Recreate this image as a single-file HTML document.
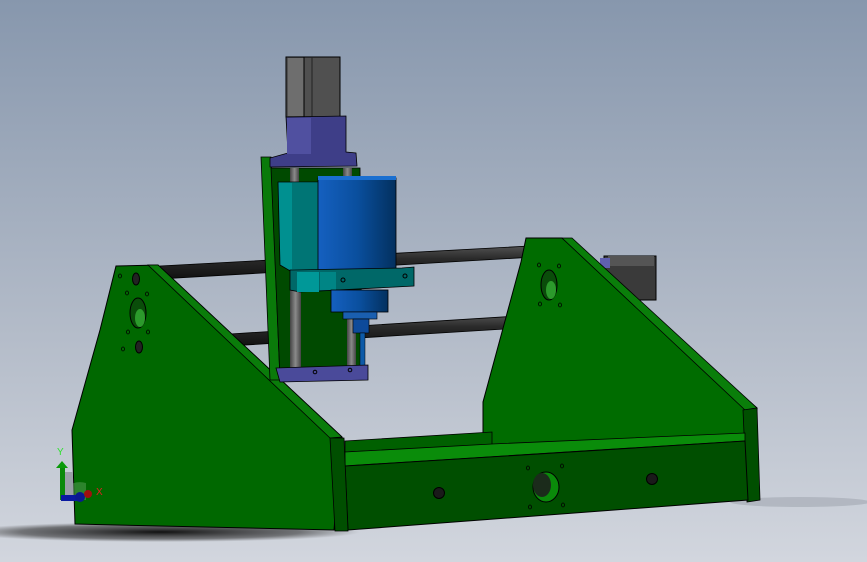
<!DOCTYPE html>
<html><head><meta charset="utf-8"><style>
html,body{margin:0;padding:0;width:867px;height:562px;overflow:hidden}
svg{display:block}
</style></head><body>
<svg width="867" height="562" viewBox="0 0 867 562" xmlns="http://www.w3.org/2000/svg">
<defs>
<linearGradient id="bg" x1="0" y1="0" x2="0" y2="1">
<stop offset="0" stop-color="#8797ad"/><stop offset="0.6" stop-color="#b4bcc9"/><stop offset="1" stop-color="#d2d6de"/>
</linearGradient>
<linearGradient id="rod" x1="0" y1="0" x2="0" y2="1">
<stop offset="0" stop-color="#555"/><stop offset="0.4" stop-color="#2a2a2a"/><stop offset="1" stop-color="#111"/>
</linearGradient>
<linearGradient id="cyl" x1="0" y1="0" x2="1" y2="0">
<stop offset="0" stop-color="#1560c0"/><stop offset="0.5" stop-color="#0a4f9e"/><stop offset="1" stop-color="#03305e"/>
</linearGradient>
<linearGradient id="vrod" x1="0" y1="0" x2="1" y2="0">
<stop offset="0" stop-color="#444"/><stop offset="0.5" stop-color="#8a8a8a"/><stop offset="1" stop-color="#444"/>
</linearGradient>
<radialGradient id="sh" cx="0.5" cy="0.5" r="0.5">
<stop offset="0" stop-color="#111" stop-opacity="1"/><stop offset="0.7" stop-color="#333" stop-opacity="0.6"/><stop offset="1" stop-color="#444" stop-opacity="0"/>
</radialGradient>
</defs>
<rect width="867" height="562" fill="url(#bg)"/>
<ellipse cx="160" cy="532" rx="200" ry="10" fill="url(#sh)"/>
<ellipse cx="800" cy="502" rx="70" ry="5" fill="#9aa0aa" opacity="0.5"/>

<!-- rods -->
<polygon points="160,266 548,245 552,256 160,279" fill="url(#rod)" stroke="#000" stroke-width="0.8"/>
<circle cx="549" cy="250.5" r="5.5" fill="#222"/>
<polygon points="230,334 550,314 553,326 230,346" fill="url(#rod)" stroke="#000" stroke-width="0.8"/>
<circle cx="551" cy="320" r="5.5" fill="#222"/>

<!-- right motor -->
<rect x="604" y="256" width="52" height="44" fill="#3a3a3a" stroke="#000"/>
<rect x="608" y="256" width="46" height="10" fill="#555"/>
<rect x="600" y="258" width="10" height="10" fill="#6060b0"/>

<!-- right plate -->
<polygon points="526,238 562,238 757,408 757,500 483,500 483,402 521,262" fill="#006c00" stroke="#000" stroke-width="1"/>
<polygon points="562,238 572,238 757,408 745,410" fill="#0a7e0a" stroke="#000" stroke-width="0.8"/>
<polygon points="743,410 757,408 760,500 747,502" fill="#004f00" stroke="#000" stroke-width="0.8"/>
<ellipse cx="549" cy="285" rx="8" ry="15" fill="#0a4d0a" stroke="#000"/>
<ellipse cx="551" cy="290" rx="5" ry="9" fill="#2c9a2c"/>
<g fill="none" stroke="#000" stroke-width="0.8"><ellipse cx="539" cy="265" rx="1.5" ry="2"/><ellipse cx="559" cy="266" rx="1.5" ry="2"/><ellipse cx="540" cy="304" rx="1.5" ry="2"/><ellipse cx="560" cy="305" rx="1.5" ry="2"/></g>

<!-- base beam -->
<polygon points="345,441 492,432 492,445 345,452" fill="#006000" stroke="#000" stroke-width="0.8"/>
<polygon points="345,452 492,444 745,433 745,441 345,466" fill="#0a8c0a" stroke="#000" stroke-width="0.8"/>
<polygon points="345,466 745,441 748,500 348,530" fill="#004f00" stroke="#000" stroke-width="1"/>
<circle cx="439" cy="493" r="5.5" fill="#1a1a1a" stroke="#000"/>
<circle cx="652" cy="479" r="5.5" fill="#1a1a1a" stroke="#000"/>
<ellipse cx="546" cy="487" rx="13" ry="15" fill="#0a8a0a" stroke="#000"/>
<ellipse cx="542" cy="485" rx="9" ry="12" fill="#1b2b1b"/>
<g fill="none" stroke="#000" stroke-width="0.8"><ellipse cx="528" cy="468" rx="1.5" ry="2"/><ellipse cx="562" cy="466" rx="1.5" ry="2"/><ellipse cx="530" cy="507" rx="1.5" ry="2"/><ellipse cx="563" cy="505" rx="1.5" ry="2"/></g>

<!-- left plate -->
<polygon points="116,266 158,265 342,437 334,530 75,524 72,430 100,330" fill="#006800" stroke="#000" stroke-width="1"/>
<polygon points="148,265 158,265 342,437 330,438" fill="#0a7c0a" stroke="#000" stroke-width="0.8"/>
<polygon points="330,438 344,438 348,531 335,531" fill="#004f00" stroke="#000" stroke-width="0.8"/>
<ellipse cx="136" cy="279" rx="3.5" ry="6" fill="#222" stroke="#000"/>
<ellipse cx="138" cy="313" rx="8" ry="15" fill="#0a4d0a" stroke="#000"/>
<ellipse cx="140" cy="318" rx="5" ry="9" fill="#2c9a2c"/>
<ellipse cx="139" cy="347" rx="3.5" ry="6" fill="#222" stroke="#000"/>
<g fill="none" stroke="#000" stroke-width="0.8"><ellipse cx="120" cy="276" rx="1.5" ry="2"/><ellipse cx="127" cy="293" rx="1.5" ry="2"/><ellipse cx="147" cy="294" rx="1.5" ry="2"/><ellipse cx="128" cy="332" rx="1.5" ry="2"/><ellipse cx="148" cy="332" rx="1.5" ry="2"/><ellipse cx="123" cy="349" rx="1.5" ry="2"/></g>

<!-- carriage back plate -->
<polygon points="261,157 271,157 280,380 270,380" fill="#0a7a0a" stroke="#000" stroke-width="0.8"/>
<polygon points="271,168 360,168 362,378 280,378" fill="#004a00" stroke="#000" stroke-width="0.8"/>
<rect x="290" y="285" width="11" height="85" fill="url(#vrod)"/>
<rect x="347" y="315" width="9" height="55" fill="url(#vrod)"/>
<rect x="290" y="168" width="9" height="14" fill="url(#vrod)"/>
<rect x="343" y="168" width="9" height="14" fill="url(#vrod)"/>
<!-- motor -->
<rect x="286" y="57" width="54" height="60" fill="#505050" stroke="#000"/>
<rect x="288" y="58" width="16" height="58" fill="#6e6e6e"/>
<line x1="304" y1="57" x2="304" y2="117" stroke="#000"/>
<line x1="312" y1="57" x2="312" y2="117" stroke="#222"/>
<!-- coupler -->
<polygon points="286,117 346,116 346,152 356,153 357,166 270,167 270,158 288,153" fill="#3e3e88" stroke="#000" stroke-width="0.8"/>
<rect x="287" y="118" width="24" height="36" fill="#5050a0"/>
<!-- teal block -->
<polygon points="278,182 320,182 322,270 292,272 280,265" fill="#009090" stroke="#000" stroke-width="0.8"/>
<rect x="292" y="183" width="28" height="86" fill="#007575"/>
<!-- cylinder -->
<rect x="318" y="178" width="78" height="93" fill="url(#cyl)" stroke="#000" stroke-width="0.8"/>
<rect x="318" y="176" width="78" height="4" fill="#1a6fd0"/>
<!-- teal bracket -->
<polygon points="290,270 402,268 414,267 414,286 300,292 290,290" fill="#006868" stroke="#000" stroke-width="0.8"/>
<rect x="297" y="272" width="22" height="20" fill="#009898"/>
<rect x="320" y="272" width="16" height="18" fill="#008585"/>
<circle cx="343" cy="280" r="2" fill="none" stroke="#000"/>
<circle cx="405" cy="276" r="2" fill="none" stroke="#000"/>
<!-- lower spindle -->
<rect x="331" y="290" width="57" height="22" fill="url(#cyl)" stroke="#000" stroke-width="0.8"/>
<rect x="343" y="312" width="34" height="7" fill="#1a5fb0" stroke="#000" stroke-width="0.6"/>
<rect x="353" y="319" width="16" height="14" fill="#0d4a9a" stroke="#000" stroke-width="0.6"/>
<rect x="360" y="333" width="5" height="45" fill="#0d5aa8" stroke="#000" stroke-width="0.5"/>
<!-- bottom bracket -->
<polygon points="276,368 368,365 368,380 280,382" fill="#4a4a9a" stroke="#000" stroke-width="0.8"/>
<circle cx="315" cy="372" r="1.8" fill="none" stroke="#000"/>
<circle cx="350" cy="370" r="1.8" fill="none" stroke="#000"/>

<!-- triad -->
<path d="M63 490 A22 22 0 0 1 86 483 L86 500 L63 500Z" fill="#5aa05a" opacity="0.5"/>
<rect x="65" y="472" width="8" height="28" fill="#9aa0a8"/>
<rect x="60" y="467" width="5" height="33" fill="#0a8a0a"/>
<polygon points="56,468 62,461 68,468" fill="#0a9a0a"/>
<rect x="61" y="495" width="22" height="6" fill="#0a1aa0"/>
<circle cx="80" cy="497" r="5" fill="#0a1a90"/>
<circle cx="88" cy="494" r="4" fill="#a01010"/>
<text x="57" y="455" font-family="Liberation Sans, sans-serif" font-size="10" fill="#30e030">Y</text>
<text x="96" y="495" font-family="Liberation Sans, sans-serif" font-size="10" fill="#e02020">X</text>
</svg>
</body></html>
